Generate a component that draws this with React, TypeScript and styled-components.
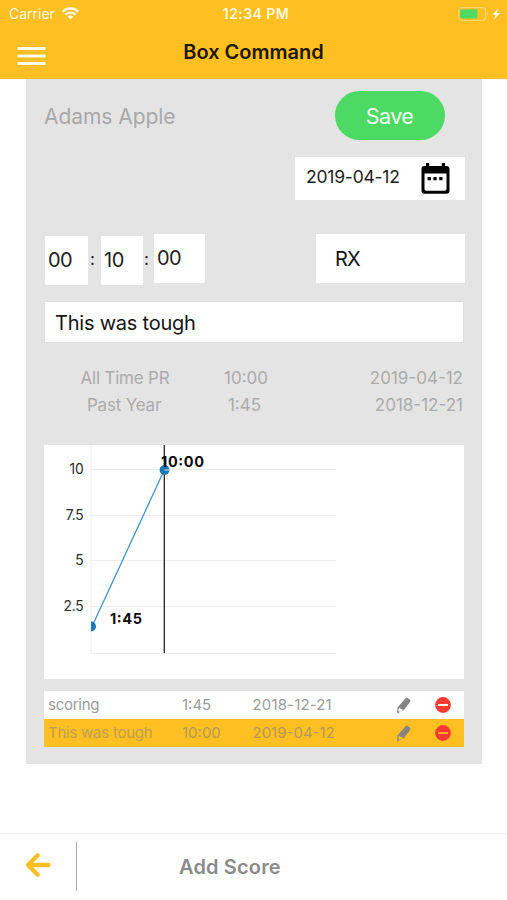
import React from "react";
import styled, { createGlobalStyle } from "styled-components";

const GlobalStyle = createGlobalStyle`
  * { box-sizing: border-box; }
  body { margin: 0; background: #fff; font-family: Inter, "Liberation Sans", sans-serif; }
`;

const Screen = styled.div`
  width: 507px;
  height: 900px;
  display: flex;
  flex-direction: column;
  overflow: hidden;
  background: #fff;
`;

const Header = styled.header`
  height: 79px;
  background: #fdbf22;
`;

const StatusBar = styled.div`
  height: 28px;
  display: grid;
  grid-template-columns: 1fr auto 1fr;
  align-items: center;
  padding: 0 4px 1px 9px;
  color: #fff8dc;
`;

const Carrier = styled.div`
  display: flex;
  align-items: center;
  gap: 7px;
  font-size: 14px;
`;

const Clock = styled.div`
  font-size: 14px;
  font-weight: 600;
  letter-spacing: 0.45px;
`;

const Battery = styled.div`
  display: flex;
  justify-content: flex-end;
`;

const NavBar = styled.div`
  height: 51px;
  display: grid;
  grid-template-columns: 28px 1fr 28px;
  align-items: center;
  padding: 5px 17px 0;
`;

const NavTitle = styled.h1`
  margin: -8px 0 0;
  text-align: center;
  font-size: 20px;
  line-height: 24px;
  font-weight: 600;
  color: #1d1704;
`;

const Panel = styled.main`
  width: 456px;
  height: 685px;
  margin-left: 26px;
  padding: 12px 17px 0 19px;
  background: #e4e4e4;
`;

const Line = styled.div<{ $mt?: number }>`
  display: flex;
  justify-content: space-between;
  align-items: flex-start;
  margin-top: ${(p) => p.$mt ?? 0}px;
`;

const WorkoutName = styled.div`
  margin-left: -1px;
  font-size: 21px;
  line-height: 52px;
  letter-spacing: -0.05px;
  color: #a8a8a8;
`;

const SaveButton = styled.button`
  width: 110px;
  height: 49px;
  margin-right: 20.5px;
  padding: 0;
  border: 0;
  border-radius: 25px;
  background: #4cd964;
  color: #f4fff2;
  font: 400 21.5px Inter, sans-serif;
  letter-spacing: -0.6px;
`;

const DateField = styled.div`
  width: 170px;
  height: 43px;
  margin: 14px 0 0 auto;
  display: flex;
  justify-content: space-between;
  padding: 6px 15px 0 11px;
  background: #fff;
  color: #1e1e1e;
  font-size: 17.5px;
  line-height: 28px;
  letter-spacing: -0.22px;
`;

const TimeInputs = styled.div`
  display: flex;
  align-items: flex-start;
  font-size: 20px;
  color: #222;
`;

const TimeBox = styled.div<{ $width: number; $raised?: boolean }>`
  width: ${(p) => p.$width}px;
  height: 49px;
  margin-top: ${(p) => (p.$raised ? 0 : 2)}px;
  padding-left: 3px;
  background: #fff;
  line-height: 48px;
  letter-spacing: -0.5px;
`;

const Colon = styled.span<{ $width: number }>`
  width: ${(p) => p.$width}px;
  padding-right: 4px;
  text-align: center;
  font-size: 17px;
  line-height: 51px;
`;

const Level = styled.div`
  width: 149px;
  height: 49px;
  padding-left: 19px;
  background: #fff;
  color: #111;
  font-size: 20px;
  line-height: 50px;
  letter-spacing: -0.8px;
`;

const Note = styled.div`
  width: 420px;
  height: 42px;
  margin: 16px 0 0 -1px;
  padding-left: 10px;
  border: 1px solid #dedede;
  background: #fff;
  color: #151515;
  font-size: 20px;
  line-height: 42px;
  letter-spacing: -0.22px;
`;

const Records = styled.div`
  display: grid;
  grid-template-columns: 162px 80px 177px;
  margin: 22px 0 0 -1px;
  font-size: 17px;
  line-height: 27px;
  text-align: center;
  color: #ababab;
`;

const RecordDate = styled.div`
  text-align: right;
`;

const RecordText = styled.div<{ $spacing?: number; $shift?: number }>`
  letter-spacing: ${(p) => p.$spacing ?? 0}px;
  padding-right: ${(p) => p.$shift ?? 0}px;
`;

const ChartCard = styled.div`
  width: 420px;
  height: 234px;
  margin: 26px 0 0 -1px;
  background: #fff;
  svg { display: block; }
`;

const History = styled.div`
  width: 420px;
  margin: 12px 0 0 -1px;
`;

const HistoryRow = styled.div<{ $active?: boolean }>`
  display: grid;
  grid-template-columns: 134px 70.5px 143.5px 39px 20px;
  align-items: center;
  height: 28px;
  padding-left: 4px;
  background: ${(p) => (p.$active ? "#fdbf22" : "#fff")};
  color: ${(p) => (p.$active ? "#b59a55" : "#9b9b9b")};
  font-size: 15px;
  line-height: 26px;
  svg { display: block; }
`;

const Cell = styled.span<{ $spacing?: number; $soft?: boolean }>`
  letter-spacing: ${(p) => p.$spacing ?? 0}px;
  padding-bottom: 1px;
  ${(p) => p.$soft && "opacity: 0.85;"}
`;

const Footer = styled.footer`
  height: 67px;
  margin-top: auto;
  display: flex;
  align-items: flex-start;
  border-top: 1px solid #eee;
  svg { margin: 18px 0 0 24px; }
`;

const Divider = styled.div`
  width: 1px;
  height: 49px;
  margin: 8px 0 0 25px;
  background: #aaa;
`;

const FooterTitle = styled.div`
  margin: 20px 0 0 102px;
  font-size: 20px;
  line-height: 26px;
  font-weight: 600;
  letter-spacing: 0.15px;
  color: #8b8b8b;
`;

const WifiIcon = () => (
  <svg width="17" height="13" viewBox="0 0 17 13" fill="none" stroke="#fffdf0" strokeWidth="2.2">
    <path d="M.7 4.7a11 11 0 0 1 15.600 0M3.500 7.600a7.100 7.100 0 0 1 10 0" />
    <path d="M8.500 12.600 5.700 9.800a3.900 3.900 0 0 1 5.600 0z" fill="#fffdf0" stroke="none" />
  </svg>
);

const BatteryIcon = () => (
  <svg width="46" height="14" viewBox="0 0 46 14">
    <rect x="1.600" y=".7" width="27" height="12.600" rx="3" fill="none" stroke="#fed66a" strokeWidth="1.200" />
    <rect x="3.300" y="2.600" width="17" height="8.800" rx="1" fill="#4cd964" />
    <path d="M30.200 5q2 2 0 4z" fill="#fed66a" />
    <path d="m41.500 1.300-6 6.400h3.200L36.800 12.800l6.200-6.800h-3.300z" fill="#fffdf0" />
  </svg>
);

const MenuIcon = () => (
  <svg width="29" height="20" viewBox="0 0 29 20" stroke="#fffbea" strokeWidth="3">
    <path d="M.5 2.500h28M.5 10h28M.5 17.500h28" />
  </svg>
);

const CalendarIcon = () => (
  <svg width="29" height="31" viewBox="0 0 29 31">
    <path
      d="M5 0h3.200v3h12.600V0H24v3h1.500a3 3 0 0 1 3 3v21.700a3 3 0 0 1-3 3h-22a3 3 0 0 1-3-3V6a3 3 0 0 1 3-3H5zM3.500 10.500V26q0 1.700 1.700 1.700h18.600q1.700 0 1.700-1.700V10.500z"
      fill="#050505"
      fillRule="evenodd"
    />
    <path d="M6.600 14h3.300v3.300H6.600zM12.400 14h3.300v3.300h-3.300zM18.200 14h3.300v3.300h-3.300z" fill="#050505" />
  </svg>
);

const PencilIcon = () => (
  <svg width="15" height="17" viewBox="0 0 15 17" fill="#858585">
    <path
      d="M9.300 1.500Q10.300.4 11.500 1.100L13.800 2.600Q15 3.400 14.200 4.700L8 13 1.100 16.500 1.500 10.500zM2.700 11.400 2.400 14l1.400.9 2.900-1.600-.4-1.300-1.700-.1-.4-1.500z"
      fillRule="evenodd"
    />
  </svg>
);

const RemoveIcon = ({ bar }: { bar: string }) => (
  <svg width="16" height="16" viewBox="0 0 16 16">
    <circle cx="8" cy="8" r="7.900" fill="#fb3b30" />
    <path d="M3 8h10" stroke={bar} strokeWidth="2" />
  </svg>
);

const BackIcon = () => (
  <svg width="27" height="26" viewBox="0 0 27 26" fill="none" stroke="#fdbf22" strokeWidth="4.300" strokeLinecap="round" strokeLinejoin="round">
    <path d="M24.500 13H4M13.700 3.300 4 13l9.700 9.700" />
  </svg>
);

const ticks = [
  { label: "10", y: 24.5 },
  { label: "7.5", y: 70.5 },
  { label: "5", y: 115.5 },
  { label: "2.5", y: 161.5 },
];

const ScoreChart = () => (
  <svg width="420" height="234" viewBox="1 0 420 234" fontFamily="Inter, sans-serif">
    <g stroke="#ededed" strokeWidth="1">
      <path d="M48 0v208.500H293" fill="none" />
      {ticks.map((t) => <path key={t.label} d={`M48 ${t.y}H293`} />)}
    </g>
    {ticks.map((t) => (
      <text key={t.label} x="40.500" y={t.y + 4} textAnchor="end" fontSize="13.800" letterSpacing="-.2" fill="#292929">{t.label}</text>
    ))}
    <path d="M121.300 0v208" stroke="#222" strokeWidth="1.300" />
    <path d="M49 181.500 121.500 24.500" stroke="#4591c6" strokeWidth="1.300" />
    <path d="M48 176.500a5 5 0 0 1 0 10z" fill="#1d78b5" />
    <circle cx="121.500" cy="25" r="4.900" fill="#1d78b5" />
    <path d="M121.500 25h5" stroke="#d5e6f2" />
    <g fontSize="14.500" fontWeight="700" fill="#0b0b0b">
      <text x="118" y="21.500" textLength="43" lengthAdjust="spacing">10:00</text>
      <text x="67" y="178.500" textLength="32" lengthAdjust="spacing">1:45</text>
    </g>
  </svg>
);

export default function App() {
  return (
    <Screen>
      <GlobalStyle />
      <Header>
        <StatusBar>
          <Carrier>Carrier <WifiIcon /></Carrier>
          <Clock>12:34 PM</Clock>
          <Battery><BatteryIcon /></Battery>
        </StatusBar>
        <NavBar>
          <MenuIcon />
          <NavTitle>Box Command</NavTitle>
        </NavBar>
      </Header>
      <Panel>
        <Line>
          <WorkoutName>Adams Apple</WorkoutName>
          <SaveButton>Save</SaveButton>
        </Line>
        <DateField>2019-04-12 <CalendarIcon /></DateField>
        <Line $mt={34}>
          <TimeInputs>
            <TimeBox $width={43}>00</TimeBox>
            <Colon $width={13}>:</Colon>
            <TimeBox $width={42}>10</TimeBox>
            <Colon $width={11}>:</Colon>
            <TimeBox $width={51} $raised>00</TimeBox>
          </TimeInputs>
          <Level>RX</Level>
        </Line>
        <Note>This was tough</Note>
        <Records>
          <RecordText $spacing={-0.2}>All Time PR</RecordText>
          <RecordText>10:00</RecordText>
          <RecordDate>2019-04-12</RecordDate>
          <RecordText $spacing={-0.2} $shift={2}>Past Year</RecordText>
          <RecordText $shift={3}>1:45</RecordText>
          <RecordDate>2018-12-21</RecordDate>
        </Records>
        <ChartCard><ScoreChart /></ChartCard>
        <History>
          <HistoryRow>
            <Cell $spacing={-0.25}>scoring</Cell>
            <Cell>1:45</Cell>
            <Cell $spacing={0.15}>2018-12-21</Cell>
            <PencilIcon />
            <RemoveIcon bar="#fff" />
          </HistoryRow>
          <HistoryRow $active>
            <Cell $spacing={-0.25} $soft>This was tough</Cell>
            <Cell>10:00</Cell>
            <Cell>2019-04-12</Cell>
            <PencilIcon />
            <RemoveIcon bar="#fdaa28" />
          </HistoryRow>
        </History>
      </Panel>
      <Footer>
        <BackIcon />
        <Divider />
        <FooterTitle>Add Score</FooterTitle>
      </Footer>
    </Screen>
  );
}
